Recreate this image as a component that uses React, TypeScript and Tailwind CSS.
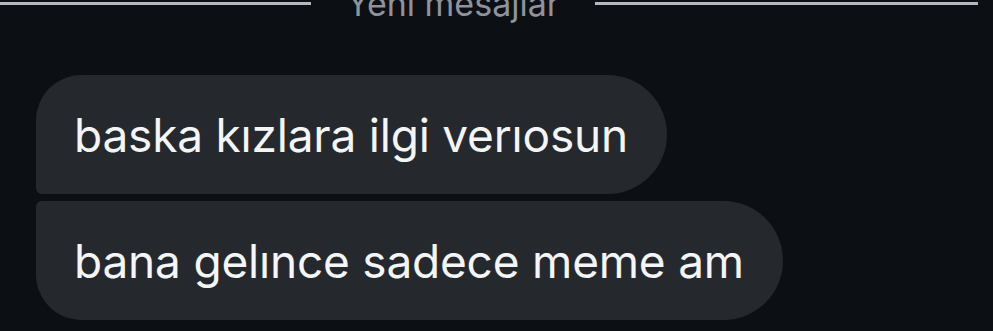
const messages = [
  { text: "baska kızlara ilgi verıosun", corners: "rounded-tl-[46px] rounded-bl-[6px]" },
  { text: "bana gelınce sadece meme am", corners: "rounded-tl-[6px] rounded-bl-[46px]" },
];

const App = () => {
  return (
    <div className="w-[993px] h-[331px] overflow-hidden bg-[#0c1014] font-['Inter',sans-serif]">
      {/* new messages divider */}
      <div className="flex items-start h-[24px] overflow-hidden">
        <div className="w-[311px] h-[3px] mt-[2px] bg-[#b4b8c0]" />
        <span className="w-[284px] text-center text-[34px] leading-none -mt-[13px] text-[#8f939b]">
          Yeni mesajlar
        </span>
        <div className="w-[383px] h-[3px] mt-[2px] bg-[#b4b8c0]" />
      </div>

      <div className="flex flex-col items-start gap-[7px] pl-[36px] pt-[51px]">
        {messages.map((m) => (
          <div
            key={m.text}
            className={`flex items-center h-[119px] pl-[38px] pr-[39px] bg-[#25292e] rounded-r-[60px] ${m.corners}`}
          >
            <span className="text-[46px] leading-none text-[#f4f5f6] tracking-[-0.2px]">{m.text}</span>
          </div>
        ))}
      </div>
    </div>
  );
};

export default App;
